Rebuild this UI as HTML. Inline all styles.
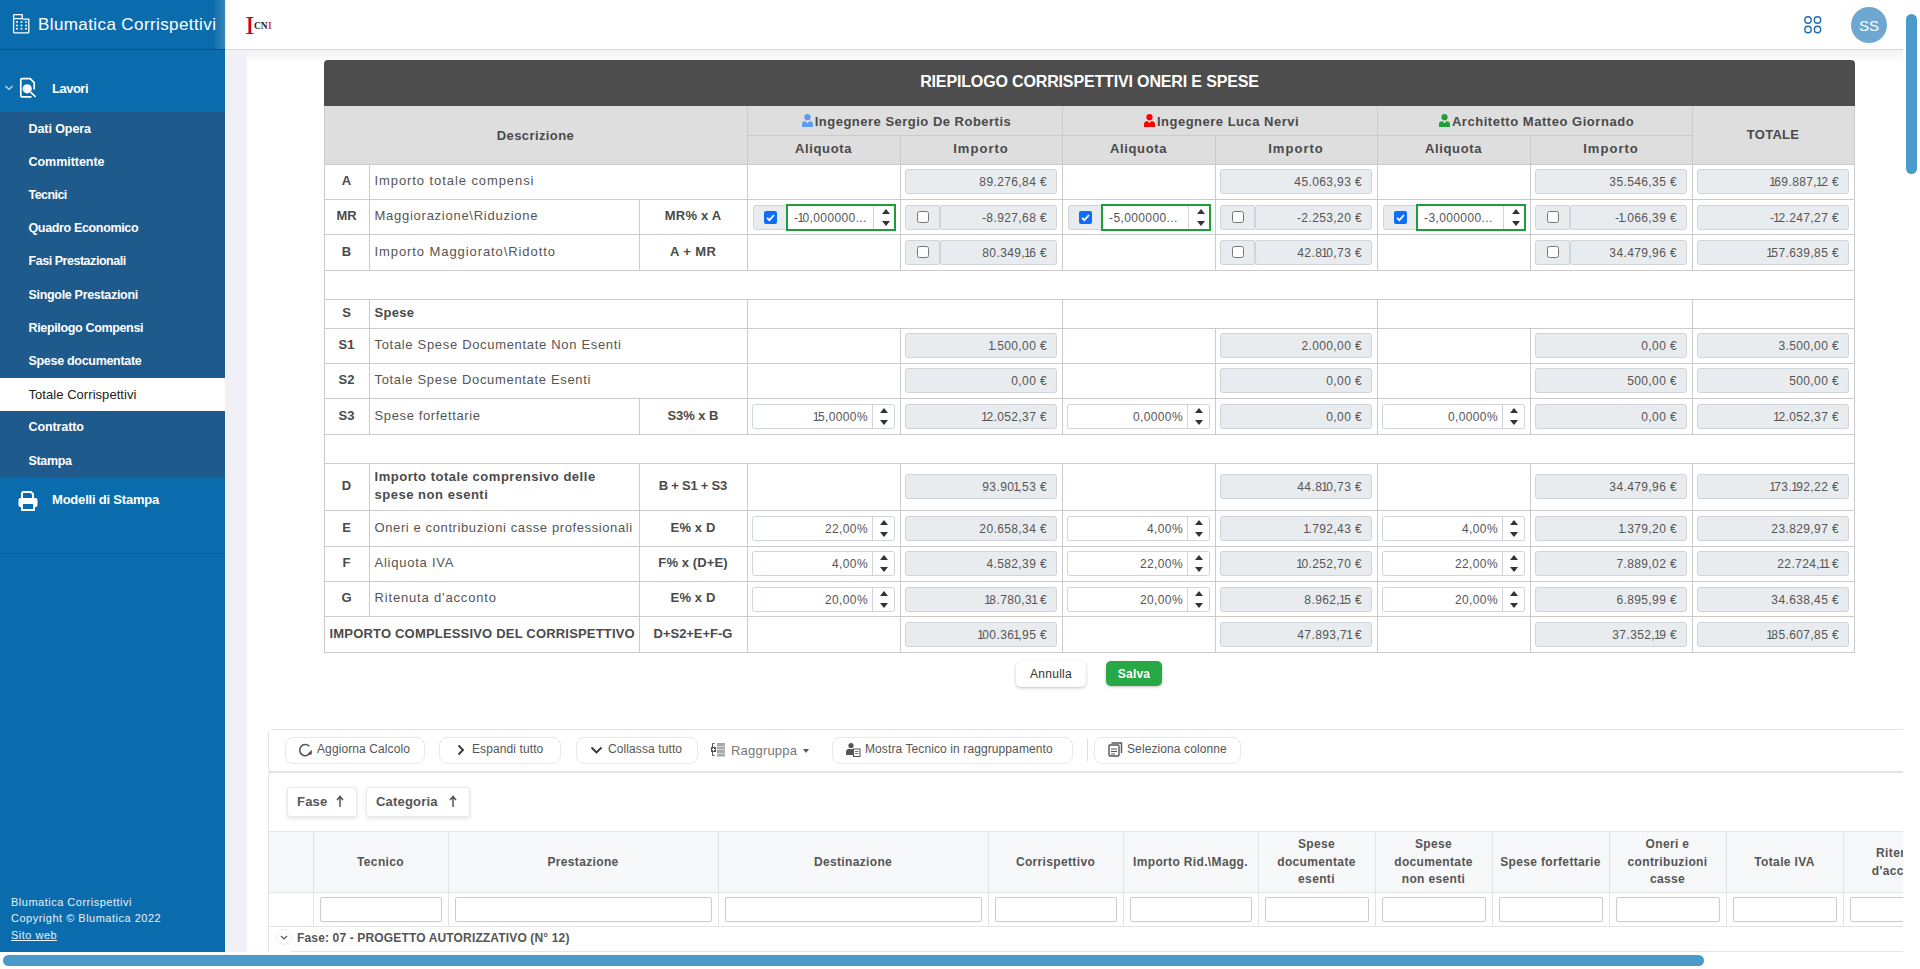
<!DOCTYPE html><html><head><meta charset="utf-8"><title>Blumatica Corrispettivi</title><style>
*{box-sizing:border-box;margin:0;padding:0}
html,body{width:1920px;height:969px;overflow:hidden;background:#fff;font-family:"Liberation Sans",sans-serif;color:#555}
.abs{position:absolute}
.hl{position:absolute;height:1px;background:#cbcbcb}
.vl{position:absolute;width:1px;background:#cbcbcb}
.t{position:absolute;white-space:nowrap;line-height:1}
.ro{position:absolute;background:#e9ecef;border:1px solid #ced4da;border-radius:3px;height:25px}
.num{position:absolute;background:#fff;border:1px solid #ced4da;border-radius:2.5px;height:25px}
.spin{position:absolute;top:0;bottom:0;border-left:1px solid #ced4da}
.up{position:absolute;width:0;height:0;border-left:4.5px solid transparent;border-right:4.5px solid transparent;border-bottom:5px solid #333}
.dn{position:absolute;width:0;height:0;border-left:4.5px solid transparent;border-right:4.5px solid transparent;border-top:5px solid #333}
.cb{position:absolute;width:12px;height:12px;border:1px solid #767676;border-radius:2.5px;background:#fff}
.cbc{position:absolute;width:13px;height:13px;border-radius:2px;background:#0d6efd}
.val{position:absolute;font-size:12px;letter-spacing:0.39px;color:#555;line-height:1;white-space:nowrap}
.one{margin-left:-1px;letter-spacing:-1.61px}
.btn{position:absolute;border:1px solid #e6e7ef;border-radius:8px;background:#fff}
</style></head><body>
<div class="abs" style="left:0;top:0;width:225px;height:952px;background:#0b6cad"></div>
<div class="abs" style="left:0;top:49px;width:225px;height:1px;background:#0a4f86"></div>
<div class="abs" style="left:213px;top:0;width:12px;height:49px;background:linear-gradient(90deg,rgba(255,255,255,0),rgba(255,255,255,0.18))"></div>
<svg class="abs" style="left:12px;top:13px" width="19" height="21" viewBox="0 0 19 21">
<path d="M2.2 1.6 H10.2 V5.6 M2.2 5.6 H10.2 M10.5 6.2 H16.8 V19.2 Q16.8 19.8 16.2 19.8 H2.2 Q1.6 19.8 1.6 19.2 V2.2 Q1.6 1.6 2.2 1.6" fill="none" stroke="#fff" stroke-width="1.3"/>
<g fill="#fff"><circle cx="5" cy="9" r="1"/><circle cx="9.5" cy="9" r="1"/><circle cx="14" cy="9" r="1"/>
<circle cx="5" cy="12.4" r="1"/><circle cx="9.5" cy="12.4" r="1"/><circle cx="14" cy="12.4" r="1"/>
<circle cx="5" cy="15.8" r="1"/><circle cx="9.5" cy="15.8" r="1"/><circle cx="14" cy="15.8" r="1"/></g>
</svg>
<div class="t" style="left:38px;top:16px;font-size:17px;letter-spacing:0.4px;color:#fff">Blumatica Corrispettivi</div>
<svg class="abs" style="left:4px;top:84px" width="10" height="8" viewBox="0 0 10 8"><path d="M1.5 2 L5 5.5 L8.5 2" fill="none" stroke="#cfe0ee" stroke-width="1.2"/></svg>
<svg class="abs" style="left:19px;top:77px" width="19" height="22" viewBox="0 0 19 22">
<path d="M12.5 19.8 H3 Q1.8 19.8 1.8 18.6 V2.8 Q1.8 1.6 3 1.6 H11.2 L15.2 5.6 V12.5" fill="none" stroke="#fff" stroke-width="1.7" stroke-linejoin="round"/>
<circle cx="8.2" cy="11.8" r="4.6" fill="#fff"/>
<path d="M11.6 15.2 L16.6 19.8" stroke="#fff" stroke-width="1.6"/>
</svg>
<div class="t" style="left:52px;top:82px;font-size:13px;font-weight:bold;color:#fff;letter-spacing:-0.503px">Lavori</div>
<div class="abs" style="left:0;top:112px;width:225px;height:365px;background:#1f5a8d"></div>
<div class="t" style="left:28.5px;top:122.5px;font-size:12.5px;font-weight:bold;color:#fff;letter-spacing:-0.078px">Dati Opera</div>
<div class="t" style="left:28.5px;top:155.7px;font-size:12.5px;font-weight:bold;color:#fff;letter-spacing:-0.037px">Committente</div>
<div class="t" style="left:28.5px;top:188.9px;font-size:12.5px;font-weight:bold;color:#fff;letter-spacing:-0.559px">Tecnici</div>
<div class="t" style="left:28.5px;top:222.1px;font-size:12.5px;font-weight:bold;color:#fff;letter-spacing:-0.348px">Quadro Economico</div>
<div class="t" style="left:28.5px;top:255.3px;font-size:12.5px;font-weight:bold;color:#fff;letter-spacing:-0.464px">Fasi Prestazionali</div>
<div class="t" style="left:28.5px;top:288.5px;font-size:12.5px;font-weight:bold;color:#fff;letter-spacing:-0.312px">Singole Prestazioni</div>
<div class="t" style="left:28.5px;top:321.7px;font-size:12.5px;font-weight:bold;color:#fff;letter-spacing:-0.345px">Riepilogo Compensi</div>
<div class="t" style="left:28.5px;top:354.9px;font-size:12.5px;font-weight:bold;color:#fff;letter-spacing:-0.301px">Spese documentate</div>
<div class="abs" style="left:0;top:378px;width:225px;height:33px;background:#fff"></div>
<div class="t" style="left:28.5px;top:387.6px;font-size:13px;color:#222;letter-spacing:0.05px">Totale Corrispettivi</div>
<div class="t" style="left:28.5px;top:421.3px;font-size:12.5px;font-weight:bold;color:#fff;letter-spacing:-0.092px">Contratto</div>
<div class="t" style="left:28.5px;top:454.5px;font-size:12.5px;font-weight:bold;color:#fff;letter-spacing:-0.331px">Stampa</div>
<div class="abs" style="left:0;top:553px;width:225px;height:1px;background:#0a5d98"></div>
<svg class="abs" style="left:17px;top:490px" width="22" height="22" viewBox="0 0 22 22">
<path d="M5 8 V3.5 Q5 2 6.5 2 H14 L16 4 V8" fill="none" stroke="#fff" stroke-width="2"/>
<rect x="1.5" y="8" width="19" height="9" rx="2" fill="#fff"/>
<rect x="5" y="13" width="12" height="7" fill="#0b6cad" stroke="#fff" stroke-width="2"/>
</svg>
<div class="t" style="left:52px;top:493px;font-size:13px;font-weight:bold;color:#fff;letter-spacing:-0.2px">Modelli di Stampa</div>
<div class="t" style="left:11px;top:897px;font-size:11px;color:#e8f0f7;letter-spacing:0.5px">Blumatica Corrispettivi</div>
<div class="t" style="left:11px;top:913px;font-size:11px;color:#e8f0f7;letter-spacing:0.5px">Copyright © Blumatica 2022</div>
<div class="t" style="left:11px;top:930px;font-size:11px;color:#e8f0f7;letter-spacing:0.5px;text-decoration:underline">Sito web</div>
<div class="abs" style="left:225px;top:0;width:1678px;height:50px;background:#fff;border-bottom:1px solid #d9d9d9"></div>
<div class="t" style="left:245px;top:13px;font-family:'Liberation Serif',serif;font-size:25px;color:#c8001e;transform:scaleX(1.15);transform-origin:left">I</div>
<div class="t" style="left:254px;top:22px;font-family:'Liberation Serif',serif;font-size:9.5px;font-weight:bold;color:#222">CN</div>
<div class="t" style="left:268px;top:22px;font-family:'Liberation Serif',serif;font-size:9.5px;font-weight:bold;color:#d04050">I</div>
<svg class="abs" style="left:1803px;top:15px" width="20" height="20" viewBox="0 0 20 20"><g fill="none" stroke="#1f6db0" stroke-width="1.4">
<circle cx="5" cy="5" r="3.2"/><circle cx="14.5" cy="5" r="3.2"/><circle cx="5" cy="14.5" r="3.2"/><circle cx="14.5" cy="14.5" r="3.2"/></g></svg>
<div class="abs" style="left:1851px;top:7px;width:36px;height:36px;border-radius:50%;background:#6ea8d0"></div>
<div class="t" style="left:1851px;top:18px;width:36px;text-align:center;font-size:15px;color:#fff">SS</div>
<div class="abs" style="left:225px;top:50px;width:22px;height:902px;background:#f1f0f6"></div>
<div class="abs" style="left:247px;top:50px;width:1656px;height:13px;background:linear-gradient(#f2f2f2,#fff)"></div>
<div class="abs" style="left:324px;top:60px;width:1531px;height:46px;background:#4d4d4d;border-radius:4px 4px 0 0"></div>
<div class="t" style="left:324px;top:74px;width:1531px;text-align:center;font-size:16px;font-weight:bold;color:#fff;letter-spacing:-0.146px">RIEPILOGO CORRISPETTIVI ONERI E SPESE</div>
<div class="abs" style="left:324px;top:106px;width:1531px;height:58px;background:#dedede"></div>
<div class="hl" style="left:324px;top:164px;width:1531px"></div>
<div class="hl" style="left:324px;top:199px;width:1531px"></div>
<div class="hl" style="left:324px;top:234px;width:1531px"></div>
<div class="hl" style="left:324px;top:270px;width:1531px"></div>
<div class="hl" style="left:324px;top:299px;width:1531px"></div>
<div class="hl" style="left:324px;top:328px;width:1531px"></div>
<div class="hl" style="left:324px;top:363px;width:1531px"></div>
<div class="hl" style="left:324px;top:398px;width:1531px"></div>
<div class="hl" style="left:324px;top:434px;width:1531px"></div>
<div class="hl" style="left:324px;top:463px;width:1531px"></div>
<div class="hl" style="left:324px;top:510px;width:1531px"></div>
<div class="hl" style="left:324px;top:546px;width:1531px"></div>
<div class="hl" style="left:324px;top:581px;width:1531px"></div>
<div class="hl" style="left:324px;top:616px;width:1531px"></div>
<div class="hl" style="left:324px;top:652px;width:1531px"></div>
<div class="hl" style="left:747px;top:135px;width:945px"></div>
<div class="vl" style="left:324px;top:106px;height:547px"></div>
<div class="vl" style="left:1854px;top:106px;height:547px"></div>
<div class="vl" style="left:747px;top:106px;height:58px"></div>
<div class="vl" style="left:1062px;top:106px;height:58px"></div>
<div class="vl" style="left:1377px;top:106px;height:58px"></div>
<div class="vl" style="left:1692px;top:106px;height:58px"></div>
<div class="vl" style="left:900px;top:135px;height:29px"></div>
<div class="vl" style="left:1215px;top:135px;height:29px"></div>
<div class="vl" style="left:1530px;top:135px;height:29px"></div>
<div class="vl" style="left:369px;top:164px;height:35px"></div>
<div class="vl" style="left:747px;top:164px;height:35px"></div>
<div class="vl" style="left:900px;top:164px;height:35px"></div>
<div class="vl" style="left:1062px;top:164px;height:35px"></div>
<div class="vl" style="left:1215px;top:164px;height:35px"></div>
<div class="vl" style="left:1377px;top:164px;height:35px"></div>
<div class="vl" style="left:1530px;top:164px;height:35px"></div>
<div class="vl" style="left:1692px;top:164px;height:35px"></div>
<div class="vl" style="left:369px;top:199px;height:35px"></div>
<div class="vl" style="left:639px;top:199px;height:35px"></div>
<div class="vl" style="left:747px;top:199px;height:35px"></div>
<div class="vl" style="left:900px;top:199px;height:35px"></div>
<div class="vl" style="left:1062px;top:199px;height:35px"></div>
<div class="vl" style="left:1215px;top:199px;height:35px"></div>
<div class="vl" style="left:1377px;top:199px;height:35px"></div>
<div class="vl" style="left:1530px;top:199px;height:35px"></div>
<div class="vl" style="left:1692px;top:199px;height:35px"></div>
<div class="vl" style="left:369px;top:234px;height:36px"></div>
<div class="vl" style="left:639px;top:234px;height:36px"></div>
<div class="vl" style="left:747px;top:234px;height:36px"></div>
<div class="vl" style="left:900px;top:234px;height:36px"></div>
<div class="vl" style="left:1062px;top:234px;height:36px"></div>
<div class="vl" style="left:1215px;top:234px;height:36px"></div>
<div class="vl" style="left:1377px;top:234px;height:36px"></div>
<div class="vl" style="left:1530px;top:234px;height:36px"></div>
<div class="vl" style="left:1692px;top:234px;height:36px"></div>
<div class="vl" style="left:369px;top:299px;height:29px"></div>
<div class="vl" style="left:747px;top:299px;height:29px"></div>
<div class="vl" style="left:1062px;top:299px;height:29px"></div>
<div class="vl" style="left:1377px;top:299px;height:29px"></div>
<div class="vl" style="left:1692px;top:299px;height:29px"></div>
<div class="vl" style="left:369px;top:328px;height:35px"></div>
<div class="vl" style="left:747px;top:328px;height:35px"></div>
<div class="vl" style="left:900px;top:328px;height:35px"></div>
<div class="vl" style="left:1062px;top:328px;height:35px"></div>
<div class="vl" style="left:1215px;top:328px;height:35px"></div>
<div class="vl" style="left:1377px;top:328px;height:35px"></div>
<div class="vl" style="left:1530px;top:328px;height:35px"></div>
<div class="vl" style="left:1692px;top:328px;height:35px"></div>
<div class="vl" style="left:369px;top:363px;height:35px"></div>
<div class="vl" style="left:747px;top:363px;height:35px"></div>
<div class="vl" style="left:900px;top:363px;height:35px"></div>
<div class="vl" style="left:1062px;top:363px;height:35px"></div>
<div class="vl" style="left:1215px;top:363px;height:35px"></div>
<div class="vl" style="left:1377px;top:363px;height:35px"></div>
<div class="vl" style="left:1530px;top:363px;height:35px"></div>
<div class="vl" style="left:1692px;top:363px;height:35px"></div>
<div class="vl" style="left:369px;top:398px;height:36px"></div>
<div class="vl" style="left:639px;top:398px;height:36px"></div>
<div class="vl" style="left:747px;top:398px;height:36px"></div>
<div class="vl" style="left:900px;top:398px;height:36px"></div>
<div class="vl" style="left:1062px;top:398px;height:36px"></div>
<div class="vl" style="left:1215px;top:398px;height:36px"></div>
<div class="vl" style="left:1377px;top:398px;height:36px"></div>
<div class="vl" style="left:1530px;top:398px;height:36px"></div>
<div class="vl" style="left:1692px;top:398px;height:36px"></div>
<div class="vl" style="left:369px;top:463px;height:47px"></div>
<div class="vl" style="left:639px;top:463px;height:47px"></div>
<div class="vl" style="left:747px;top:463px;height:47px"></div>
<div class="vl" style="left:900px;top:463px;height:47px"></div>
<div class="vl" style="left:1062px;top:463px;height:47px"></div>
<div class="vl" style="left:1215px;top:463px;height:47px"></div>
<div class="vl" style="left:1377px;top:463px;height:47px"></div>
<div class="vl" style="left:1530px;top:463px;height:47px"></div>
<div class="vl" style="left:1692px;top:463px;height:47px"></div>
<div class="vl" style="left:369px;top:510px;height:36px"></div>
<div class="vl" style="left:639px;top:510px;height:36px"></div>
<div class="vl" style="left:747px;top:510px;height:36px"></div>
<div class="vl" style="left:900px;top:510px;height:36px"></div>
<div class="vl" style="left:1062px;top:510px;height:36px"></div>
<div class="vl" style="left:1215px;top:510px;height:36px"></div>
<div class="vl" style="left:1377px;top:510px;height:36px"></div>
<div class="vl" style="left:1530px;top:510px;height:36px"></div>
<div class="vl" style="left:1692px;top:510px;height:36px"></div>
<div class="vl" style="left:369px;top:546px;height:35px"></div>
<div class="vl" style="left:639px;top:546px;height:35px"></div>
<div class="vl" style="left:747px;top:546px;height:35px"></div>
<div class="vl" style="left:900px;top:546px;height:35px"></div>
<div class="vl" style="left:1062px;top:546px;height:35px"></div>
<div class="vl" style="left:1215px;top:546px;height:35px"></div>
<div class="vl" style="left:1377px;top:546px;height:35px"></div>
<div class="vl" style="left:1530px;top:546px;height:35px"></div>
<div class="vl" style="left:1692px;top:546px;height:35px"></div>
<div class="vl" style="left:369px;top:581px;height:35px"></div>
<div class="vl" style="left:639px;top:581px;height:35px"></div>
<div class="vl" style="left:747px;top:581px;height:35px"></div>
<div class="vl" style="left:900px;top:581px;height:35px"></div>
<div class="vl" style="left:1062px;top:581px;height:35px"></div>
<div class="vl" style="left:1215px;top:581px;height:35px"></div>
<div class="vl" style="left:1377px;top:581px;height:35px"></div>
<div class="vl" style="left:1530px;top:581px;height:35px"></div>
<div class="vl" style="left:1692px;top:581px;height:35px"></div>
<div class="vl" style="left:639px;top:616px;height:36px"></div>
<div class="vl" style="left:747px;top:616px;height:36px"></div>
<div class="vl" style="left:900px;top:616px;height:36px"></div>
<div class="vl" style="left:1062px;top:616px;height:36px"></div>
<div class="vl" style="left:1215px;top:616px;height:36px"></div>
<div class="vl" style="left:1377px;top:616px;height:36px"></div>
<div class="vl" style="left:1530px;top:616px;height:36px"></div>
<div class="vl" style="left:1692px;top:616px;height:36px"></div>
<div class="t" style="left:324px;top:128.5px;width:423px;text-align:center;font-size:13px;font-weight:bold;color:#4a4a4a;letter-spacing:0.402px">Descrizione</div>
<div class="t" style="left:749px;top:113.5px;width:315px;text-align:center;font-size:13px;font-weight:bold;color:#4a4a4a;letter-spacing:0.49px"><svg width="11" height="13" viewBox="0 0 11 13" style="vertical-align:-1px;margin-right:2px"><circle cx="5.5" cy="3.2" r="3.1" fill="#5b9bf0"/><path d="M0 13 V10.2 Q0 7.3 3 7.3 H8 Q11 7.3 11 10.2 V13 Z" fill="#5b9bf0"/><path d="M3.8 7.3 L5.5 9.3 L7.2 7.3Z" fill="#fff"/></svg>Ingegnere Sergio De Robertis</div>
<div class="t" style="left:1064px;top:113.5px;width:315px;text-align:center;font-size:13px;font-weight:bold;color:#4a4a4a;letter-spacing:0.494px"><svg width="11" height="13" viewBox="0 0 11 13" style="vertical-align:-1px;margin-right:2px"><circle cx="5.5" cy="3.2" r="3.1" fill="#ff0000"/><path d="M0 13 V10.2 Q0 7.3 3 7.3 H8 Q11 7.3 11 10.2 V13 Z" fill="#ff0000"/><path d="M3.8 7.3 L5.5 9.3 L7.2 7.3Z" fill="#fff"/></svg>Ingegnere Luca Nervi</div>
<div class="t" style="left:1379px;top:113.5px;width:315px;text-align:center;font-size:13px;font-weight:bold;color:#4a4a4a;letter-spacing:0.537px"><svg width="11" height="13" viewBox="0 0 11 13" style="vertical-align:-1px;margin-right:2px"><circle cx="5.5" cy="3.2" r="3.1" fill="#1e9e3a"/><path d="M0 13 V10.2 Q0 7.3 3 7.3 H8 Q11 7.3 11 10.2 V13 Z" fill="#1e9e3a"/><path d="M3.8 7.3 L5.5 9.3 L7.2 7.3Z" fill="#fff"/></svg>Architetto Matteo Giornado</div>
<div class="t" style="left:747px;top:142.0px;width:153px;text-align:center;font-size:13px;font-weight:bold;color:#4a4a4a;letter-spacing:0.645px">Aliquota</div>
<div class="t" style="left:900px;top:142.0px;width:162px;text-align:center;font-size:13px;font-weight:bold;color:#4a4a4a;letter-spacing:1.038px">Importo</div>
<div class="t" style="left:1062px;top:142.0px;width:153px;text-align:center;font-size:13px;font-weight:bold;color:#4a4a4a;letter-spacing:0.645px">Aliquota</div>
<div class="t" style="left:1215px;top:142.0px;width:162px;text-align:center;font-size:13px;font-weight:bold;color:#4a4a4a;letter-spacing:1.038px">Importo</div>
<div class="t" style="left:1377px;top:142.0px;width:153px;text-align:center;font-size:13px;font-weight:bold;color:#4a4a4a;letter-spacing:0.645px">Aliquota</div>
<div class="t" style="left:1530px;top:142.0px;width:162px;text-align:center;font-size:13px;font-weight:bold;color:#4a4a4a;letter-spacing:1.038px">Importo</div>
<div class="t" style="left:1692px;top:128.0px;width:162px;text-align:center;font-size:13px;font-weight:bold;color:#4a4a4a;letter-spacing:0.244px">TOTALE</div>
<div class="t" style="left:324px;top:174.0px;width:45px;text-align:center;font-size:13px;font-weight:bold;color:#4a4a4a;letter-spacing:0px">A</div>
<div class="t" style="left:324px;top:209.0px;width:45px;text-align:center;font-size:13px;font-weight:bold;color:#4a4a4a;letter-spacing:0px">MR</div>
<div class="t" style="left:324px;top:244.5px;width:45px;text-align:center;font-size:13px;font-weight:bold;color:#4a4a4a;letter-spacing:0px">B</div>
<div class="t" style="left:324px;top:306.0px;width:45px;text-align:center;font-size:13px;font-weight:bold;color:#4a4a4a;letter-spacing:0px">S</div>
<div class="t" style="left:324px;top:338.0px;width:45px;text-align:center;font-size:13px;font-weight:bold;color:#4a4a4a;letter-spacing:0px">S1</div>
<div class="t" style="left:324px;top:373.0px;width:45px;text-align:center;font-size:13px;font-weight:bold;color:#4a4a4a;letter-spacing:0px">S2</div>
<div class="t" style="left:324px;top:408.5px;width:45px;text-align:center;font-size:13px;font-weight:bold;color:#4a4a4a;letter-spacing:0px">S3</div>
<div class="t" style="left:324px;top:479.0px;width:45px;text-align:center;font-size:13px;font-weight:bold;color:#4a4a4a;letter-spacing:0px">D</div>
<div class="t" style="left:324px;top:520.5px;width:45px;text-align:center;font-size:13px;font-weight:bold;color:#4a4a4a;letter-spacing:0px">E</div>
<div class="t" style="left:324px;top:556.0px;width:45px;text-align:center;font-size:13px;font-weight:bold;color:#4a4a4a;letter-spacing:0px">F</div>
<div class="t" style="left:324px;top:591.0px;width:45px;text-align:center;font-size:13px;font-weight:bold;color:#4a4a4a;letter-spacing:0px">G</div>
<div class="t" style="left:374.5px;top:174.0px;font-size:13px;color:#555;letter-spacing:0.92px">Importo totale compensi</div>
<div class="t" style="left:374.5px;top:209.0px;font-size:13px;color:#555;letter-spacing:0.738px">Maggiorazione\Riduzione</div>
<div class="t" style="left:374.5px;top:244.5px;font-size:13px;color:#555;letter-spacing:0.917px">Importo Maggiorato\Ridotto</div>
<div class="t" style="left:374.5px;top:338.0px;font-size:13px;color:#555;letter-spacing:0.681px">Totale Spese Documentate Non Esenti</div>
<div class="t" style="left:374.5px;top:373.0px;font-size:13px;color:#555;letter-spacing:0.67px">Totale Spese Documentate Esenti</div>
<div class="t" style="left:374.5px;top:408.5px;font-size:13px;color:#555;letter-spacing:0.631px">Spese forfettarie</div>
<div class="t" style="left:374.5px;top:520.5px;font-size:13px;color:#555;letter-spacing:0.607px">Oneri e contribuzioni casse professionali</div>
<div class="t" style="left:374.5px;top:556.0px;font-size:13px;color:#555;letter-spacing:0.764px">Aliquota IVA</div>
<div class="t" style="left:374.5px;top:591.0px;font-size:13px;color:#555;letter-spacing:0.835px">Ritenuta d'acconto</div>
<div class="t" style="left:374.5px;top:306.0px;font-size:13px;font-weight:bold;color:#4a4a4a;letter-spacing:0.297px">Spese</div>
<div class="t" style="left:374.5px;top:467.5px;font-size:13px;font-weight:bold;color:#4a4a4a;letter-spacing:0.522px;line-height:18.5px">Importo totale comprensivo delle<br>spese non esenti</div>
<div class="t" style="left:329.5px;top:626.5px;font-size:13px;font-weight:bold;color:#4a4a4a;letter-spacing:0.185px">IMPORTO COMPLESSIVO DEL CORRISPETTIVO</div>
<div class="t" style="left:639.1135px;top:209.0px;width:108px;text-align:center;font-size:13px;font-weight:bold;color:#4a4a4a;letter-spacing:0.227px">MR% x A</div>
<div class="t" style="left:639.206px;top:244.5px;width:108px;text-align:center;font-size:13px;font-weight:bold;color:#4a4a4a;letter-spacing:0.412px">A + MR</div>
<div class="t" style="left:638.974px;top:408.5px;width:108px;text-align:center;font-size:13px;font-weight:bold;color:#4a4a4a;letter-spacing:-0.052px">S3% x B</div>
<div class="t" style="left:638.8835px;top:479.0px;width:108px;text-align:center;font-size:13px;font-weight:bold;color:#4a4a4a;letter-spacing:-0.233px">B + S1 + S3</div>
<div class="t" style="left:639.067px;top:520.5px;width:108px;text-align:center;font-size:13px;font-weight:bold;color:#4a4a4a;letter-spacing:0.134px">E% x D</div>
<div class="t" style="left:639.0545px;top:556.0px;width:108px;text-align:center;font-size:13px;font-weight:bold;color:#4a4a4a;letter-spacing:0.109px">F% x (D+E)</div>
<div class="t" style="left:639.067px;top:591.0px;width:108px;text-align:center;font-size:13px;font-weight:bold;color:#4a4a4a;letter-spacing:0.134px">E% x D</div>
<div class="t" style="left:638.979px;top:626.5px;width:108px;text-align:center;font-size:13px;font-weight:bold;color:#4a4a4a;letter-spacing:-0.042px">D+S2+E+F-G</div>
<div class="ro" style="left:905px;top:169px;width:152px"><div class="val" style="right:9px;top:6px">89.276,84 €</div></div>
<div class="ro" style="left:753px;top:205px;width:35px;border-radius:3px 0 0 3px"></div>
<div class="cbc" style="left:764px;top:211px"><svg width="13" height="13" viewBox="0 0 13 13" style="position:absolute;left:0;top:0"><path d="M3 6.8 L5.4 9.2 L10 4" fill="none" stroke="#fff" stroke-width="1.8"/></svg></div>
<div class="abs" style="left:786px;top:204px;width:110px;height:27px;border:2px solid #1e9e3a;background:#fff"><div class="val" style="left:6px;top:6px">-<span class="one">1</span>0,000000...</div><div class="spin" style="left:85px;width:1px"></div><div class="up" style="left:94px;top:3px"></div><div class="dn" style="left:94px;top:15px"></div></div>
<div class="ro" style="left:905px;top:205px;width:35px;border-radius:3px 0 0 3px"></div>
<div class="cb" style="left:917px;top:211px"></div>
<div class="ro" style="left:940px;top:205px;width:117px;border-radius:3px"><div class="val" style="right:9px;top:6px">-8.927,68 €</div></div>
<div class="ro" style="left:905px;top:240px;width:35px;border-radius:3px 0 0 3px"></div>
<div class="cb" style="left:917px;top:246px"></div>
<div class="ro" style="left:940px;top:240px;width:117px;border-radius:3px"><div class="val" style="right:9px;top:6px">80.349,<span class="one">1</span>6 €</div></div>
<div class="ro" style="left:905px;top:333px;width:152px"><div class="val" style="right:9px;top:6px"><span class="one">1</span>.500,00 €</div></div>
<div class="ro" style="left:905px;top:368px;width:152px"><div class="val" style="right:9px;top:6px">0,00 €</div></div>
<div class="num" style="left:752px;top:404px;width:143px"><div class="val" style="right:26px;top:6px"><span class="one">1</span>5,0000%</div><div class="spin" style="left:119px;width:23px"></div><div class="up" style="left:127px;top:3px"></div><div class="dn" style="left:127px;top:15px"></div></div>
<div class="ro" style="left:905px;top:404px;width:152px"><div class="val" style="right:9px;top:6px"><span class="one">1</span>2.052,37 €</div></div>
<div class="ro" style="left:905px;top:474px;width:152px"><div class="val" style="right:9px;top:6px">93.90<span class="one">1</span>,53 €</div></div>
<div class="num" style="left:752px;top:516px;width:143px"><div class="val" style="right:26px;top:6px">22,00%</div><div class="spin" style="left:119px;width:23px"></div><div class="up" style="left:127px;top:3px"></div><div class="dn" style="left:127px;top:15px"></div></div>
<div class="ro" style="left:905px;top:516px;width:152px"><div class="val" style="right:9px;top:6px">20.658,34 €</div></div>
<div class="num" style="left:752px;top:551px;width:143px"><div class="val" style="right:26px;top:6px">4,00%</div><div class="spin" style="left:119px;width:23px"></div><div class="up" style="left:127px;top:3px"></div><div class="dn" style="left:127px;top:15px"></div></div>
<div class="ro" style="left:905px;top:551px;width:152px"><div class="val" style="right:9px;top:6px">4.582,39 €</div></div>
<div class="num" style="left:752px;top:587px;width:143px"><div class="val" style="right:26px;top:6px">20,00%</div><div class="spin" style="left:119px;width:23px"></div><div class="up" style="left:127px;top:3px"></div><div class="dn" style="left:127px;top:15px"></div></div>
<div class="ro" style="left:905px;top:587px;width:152px"><div class="val" style="right:9px;top:6px"><span class="one">1</span>8.780,3<span class="one">1</span> €</div></div>
<div class="ro" style="left:905px;top:622px;width:152px"><div class="val" style="right:9px;top:6px"><span class="one">1</span>00.36<span class="one">1</span>,95 €</div></div>
<div class="ro" style="left:1220px;top:169px;width:152px"><div class="val" style="right:9px;top:6px">45.063,93 €</div></div>
<div class="ro" style="left:1068px;top:205px;width:35px;border-radius:3px 0 0 3px"></div>
<div class="cbc" style="left:1079px;top:211px"><svg width="13" height="13" viewBox="0 0 13 13" style="position:absolute;left:0;top:0"><path d="M3 6.8 L5.4 9.2 L10 4" fill="none" stroke="#fff" stroke-width="1.8"/></svg></div>
<div class="abs" style="left:1101px;top:204px;width:110px;height:27px;border:2px solid #1e9e3a;background:#fff"><div class="val" style="left:6px;top:6px">-5,000000...</div><div class="spin" style="left:85px;width:1px"></div><div class="up" style="left:94px;top:3px"></div><div class="dn" style="left:94px;top:15px"></div></div>
<div class="ro" style="left:1220px;top:205px;width:35px;border-radius:3px 0 0 3px"></div>
<div class="cb" style="left:1232px;top:211px"></div>
<div class="ro" style="left:1255px;top:205px;width:117px;border-radius:3px"><div class="val" style="right:9px;top:6px">-2.253,20 €</div></div>
<div class="ro" style="left:1220px;top:240px;width:35px;border-radius:3px 0 0 3px"></div>
<div class="cb" style="left:1232px;top:246px"></div>
<div class="ro" style="left:1255px;top:240px;width:117px;border-radius:3px"><div class="val" style="right:9px;top:6px">42.8<span class="one">1</span>0,73 €</div></div>
<div class="ro" style="left:1220px;top:333px;width:152px"><div class="val" style="right:9px;top:6px">2.000,00 €</div></div>
<div class="ro" style="left:1220px;top:368px;width:152px"><div class="val" style="right:9px;top:6px">0,00 €</div></div>
<div class="num" style="left:1067px;top:404px;width:143px"><div class="val" style="right:26px;top:6px">0,0000%</div><div class="spin" style="left:119px;width:23px"></div><div class="up" style="left:127px;top:3px"></div><div class="dn" style="left:127px;top:15px"></div></div>
<div class="ro" style="left:1220px;top:404px;width:152px"><div class="val" style="right:9px;top:6px">0,00 €</div></div>
<div class="ro" style="left:1220px;top:474px;width:152px"><div class="val" style="right:9px;top:6px">44.8<span class="one">1</span>0,73 €</div></div>
<div class="num" style="left:1067px;top:516px;width:143px"><div class="val" style="right:26px;top:6px">4,00%</div><div class="spin" style="left:119px;width:23px"></div><div class="up" style="left:127px;top:3px"></div><div class="dn" style="left:127px;top:15px"></div></div>
<div class="ro" style="left:1220px;top:516px;width:152px"><div class="val" style="right:9px;top:6px"><span class="one">1</span>.792,43 €</div></div>
<div class="num" style="left:1067px;top:551px;width:143px"><div class="val" style="right:26px;top:6px">22,00%</div><div class="spin" style="left:119px;width:23px"></div><div class="up" style="left:127px;top:3px"></div><div class="dn" style="left:127px;top:15px"></div></div>
<div class="ro" style="left:1220px;top:551px;width:152px"><div class="val" style="right:9px;top:6px"><span class="one">1</span>0.252,70 €</div></div>
<div class="num" style="left:1067px;top:587px;width:143px"><div class="val" style="right:26px;top:6px">20,00%</div><div class="spin" style="left:119px;width:23px"></div><div class="up" style="left:127px;top:3px"></div><div class="dn" style="left:127px;top:15px"></div></div>
<div class="ro" style="left:1220px;top:587px;width:152px"><div class="val" style="right:9px;top:6px">8.962,<span class="one">1</span>5 €</div></div>
<div class="ro" style="left:1220px;top:622px;width:152px"><div class="val" style="right:9px;top:6px">47.893,7<span class="one">1</span> €</div></div>
<div class="ro" style="left:1535px;top:169px;width:152px"><div class="val" style="right:9px;top:6px">35.546,35 €</div></div>
<div class="ro" style="left:1383px;top:205px;width:35px;border-radius:3px 0 0 3px"></div>
<div class="cbc" style="left:1394px;top:211px"><svg width="13" height="13" viewBox="0 0 13 13" style="position:absolute;left:0;top:0"><path d="M3 6.8 L5.4 9.2 L10 4" fill="none" stroke="#fff" stroke-width="1.8"/></svg></div>
<div class="abs" style="left:1416px;top:204px;width:110px;height:27px;border:2px solid #1e9e3a;background:#fff"><div class="val" style="left:6px;top:6px">-3,000000...</div><div class="spin" style="left:85px;width:1px"></div><div class="up" style="left:94px;top:3px"></div><div class="dn" style="left:94px;top:15px"></div></div>
<div class="ro" style="left:1535px;top:205px;width:35px;border-radius:3px 0 0 3px"></div>
<div class="cb" style="left:1547px;top:211px"></div>
<div class="ro" style="left:1570px;top:205px;width:117px;border-radius:3px"><div class="val" style="right:9px;top:6px">-<span class="one">1</span>.066,39 €</div></div>
<div class="ro" style="left:1535px;top:240px;width:35px;border-radius:3px 0 0 3px"></div>
<div class="cb" style="left:1547px;top:246px"></div>
<div class="ro" style="left:1570px;top:240px;width:117px;border-radius:3px"><div class="val" style="right:9px;top:6px">34.479,96 €</div></div>
<div class="ro" style="left:1535px;top:333px;width:152px"><div class="val" style="right:9px;top:6px">0,00 €</div></div>
<div class="ro" style="left:1535px;top:368px;width:152px"><div class="val" style="right:9px;top:6px">500,00 €</div></div>
<div class="num" style="left:1382px;top:404px;width:143px"><div class="val" style="right:26px;top:6px">0,0000%</div><div class="spin" style="left:119px;width:23px"></div><div class="up" style="left:127px;top:3px"></div><div class="dn" style="left:127px;top:15px"></div></div>
<div class="ro" style="left:1535px;top:404px;width:152px"><div class="val" style="right:9px;top:6px">0,00 €</div></div>
<div class="ro" style="left:1535px;top:474px;width:152px"><div class="val" style="right:9px;top:6px">34.479,96 €</div></div>
<div class="num" style="left:1382px;top:516px;width:143px"><div class="val" style="right:26px;top:6px">4,00%</div><div class="spin" style="left:119px;width:23px"></div><div class="up" style="left:127px;top:3px"></div><div class="dn" style="left:127px;top:15px"></div></div>
<div class="ro" style="left:1535px;top:516px;width:152px"><div class="val" style="right:9px;top:6px"><span class="one">1</span>.379,20 €</div></div>
<div class="num" style="left:1382px;top:551px;width:143px"><div class="val" style="right:26px;top:6px">22,00%</div><div class="spin" style="left:119px;width:23px"></div><div class="up" style="left:127px;top:3px"></div><div class="dn" style="left:127px;top:15px"></div></div>
<div class="ro" style="left:1535px;top:551px;width:152px"><div class="val" style="right:9px;top:6px">7.889,02 €</div></div>
<div class="num" style="left:1382px;top:587px;width:143px"><div class="val" style="right:26px;top:6px">20,00%</div><div class="spin" style="left:119px;width:23px"></div><div class="up" style="left:127px;top:3px"></div><div class="dn" style="left:127px;top:15px"></div></div>
<div class="ro" style="left:1535px;top:587px;width:152px"><div class="val" style="right:9px;top:6px">6.895,99 €</div></div>
<div class="ro" style="left:1535px;top:622px;width:152px"><div class="val" style="right:9px;top:6px">37.352,<span class="one">1</span>9 €</div></div>
<div class="ro" style="left:1697px;top:169px;width:152px"><div class="val" style="right:9px;top:6px"><span class="one">1</span>69.887,<span class="one">1</span>2 €</div></div>
<div class="ro" style="left:1697px;top:205px;width:152px"><div class="val" style="right:9px;top:6px">-<span class="one">1</span>2.247,27 €</div></div>
<div class="ro" style="left:1697px;top:240px;width:152px"><div class="val" style="right:9px;top:6px"><span class="one">1</span>57.639,85 €</div></div>
<div class="ro" style="left:1697px;top:333px;width:152px"><div class="val" style="right:9px;top:6px">3.500,00 €</div></div>
<div class="ro" style="left:1697px;top:368px;width:152px"><div class="val" style="right:9px;top:6px">500,00 €</div></div>
<div class="ro" style="left:1697px;top:404px;width:152px"><div class="val" style="right:9px;top:6px"><span class="one">1</span>2.052,37 €</div></div>
<div class="ro" style="left:1697px;top:474px;width:152px"><div class="val" style="right:9px;top:6px"><span class="one">1</span>73.<span class="one">1</span>92,22 €</div></div>
<div class="ro" style="left:1697px;top:516px;width:152px"><div class="val" style="right:9px;top:6px">23.829,97 €</div></div>
<div class="ro" style="left:1697px;top:551px;width:152px"><div class="val" style="right:9px;top:6px">22.724,<span class="one">1</span><span class="one">1</span> €</div></div>
<div class="ro" style="left:1697px;top:587px;width:152px"><div class="val" style="right:9px;top:6px">34.638,45 €</div></div>
<div class="ro" style="left:1697px;top:622px;width:152px"><div class="val" style="right:9px;top:6px"><span class="one">1</span>85.607,85 €</div></div>
<div class="abs" style="left:1016px;top:661px;width:70px;height:26px;border-radius:5px;background:#fff;box-shadow:0 1px 3px rgba(0,0,0,0.25)"></div>
<div class="t" style="left:1016px;top:668px;width:70px;text-align:center;font-size:12px;color:#333;letter-spacing:0.3px">Annulla</div>
<div class="abs" style="left:1106px;top:661px;width:56px;height:25px;border-radius:5px;background:#28a745;box-shadow:0 1px 3px rgba(0,0,0,0.25)"></div>
<div class="t" style="left:1106px;top:668px;width:56px;text-align:center;font-size:12px;font-weight:bold;color:#fff;letter-spacing:0.2px">Salva</div>
<div class="abs" style="left:268px;top:771px;width:1640px;height:2px;background:#e6e6e6"></div>
<div class="abs" style="left:268px;top:729px;width:1650px;height:43px;border:1px solid #e4e4e4;border-radius:5px;background:#fff"></div>
<div class="btn" style="left:285px;top:737px;width:140px;height:27px"></div>
<svg class="abs" style="left:298px;top:743px" width="15" height="14" viewBox="0 0 15 14"><path d="M11.3 3.2 A5.6 5.6 0 1 0 12.2 9.8" fill="none" stroke="#555" stroke-width="1.6"/><path d="M13.8 6.8 L13.8 11.6 L9 11.6 Z" fill="#555"/></svg>
<div class="t" style="left:317px;top:743px;font-size:12px;color:#555;letter-spacing:0.1px">Aggiorna Calcolo</div>
<div class="btn" style="left:439px;top:737px;width:122px;height:27px"></div>
<svg class="abs" style="left:456px;top:744px" width="10" height="12" viewBox="0 0 10 12"><path d="M2.5 1.5 L7 6 L2.5 10.5" fill="none" stroke="#333" stroke-width="1.8"/></svg>
<div class="t" style="left:472px;top:743px;font-size:12px;color:#555;letter-spacing:0.1px">Espandi tutto</div>
<div class="btn" style="left:576px;top:737px;width:122px;height:27px"></div>
<svg class="abs" style="left:590px;top:745px" width="13" height="10" viewBox="0 0 13 10"><path d="M1.5 2.5 L6.5 7.5 L11.5 2.5" fill="none" stroke="#333" stroke-width="1.8"/></svg>
<div class="t" style="left:608px;top:743px;font-size:12px;color:#555;letter-spacing:0.1px">Collassa tutto</div>
<svg class="abs" style="left:711px;top:742px" width="15" height="15" viewBox="0 0 15 15"><path d="M3.5 1.5 H1.5 V13.5 H3.5" fill="none" stroke="#555" stroke-width="1"/><rect x="0" y="5" width="5" height="5" fill="#555"/><path d="M2.5 6 V9 M1 7.5 H4" stroke="#fff" stroke-width="1"/><g fill="#aaa"><rect x="6" y="1" width="8" height="3"/><rect x="6" y="4.5" width="8" height="3"/><rect x="6" y="8" width="8" height="3"/><rect x="6" y="11.5" width="8" height="3"/></g></svg>
<div class="t" style="left:731px;top:744px;font-size:13px;color:#777;letter-spacing:0.2px">Raggruppa</div>
<div class="abs" style="left:803px;top:749px;width:0;height:0;border-left:3.5px solid transparent;border-right:3.5px solid transparent;border-top:4px solid #555"></div>
<div class="btn" style="left:832px;top:737px;width:241px;height:27px"></div>
<svg class="abs" style="left:846px;top:742px" width="15" height="15" viewBox="0 0 15 15"><circle cx="5" cy="3.5" r="2.6" fill="#555"/><path d="M0 13 V10 Q0 7 3 7 H7 L7 13Z" fill="#555"/><rect x="7.5" y="7" width="6.5" height="7.5" fill="#fff" stroke="#555" stroke-width="1"/><path d="M9 9.5 H12.5 M9 11.5 H12.5" stroke="#555" stroke-width="0.8"/></svg>
<div class="t" style="left:865px;top:743px;font-size:12px;color:#555;letter-spacing:0.1px">Mostra Tecnico in raggruppamento</div>
<div class="abs" style="left:1087px;top:739px;width:1px;height:22px;background:#ddd"></div>
<div class="btn" style="left:1094px;top:737px;width:147px;height:27px"></div>
<svg class="abs" style="left:1108px;top:742px" width="15" height="15" viewBox="0 0 15 15"><rect x="1" y="3" width="10" height="11" rx="1" fill="none" stroke="#555" stroke-width="1.4"/><path d="M3.5 1 H13.5 V11" fill="none" stroke="#555" stroke-width="1.4"/><path d="M3 7 H9 M3 9.5 H9 M3 12 H7" stroke="#555" stroke-width="1.2"/></svg>
<div class="t" style="left:1127px;top:743px;font-size:12px;color:#555;letter-spacing:0.1px">Seleziona colonne</div>
<div class="abs" style="left:268px;top:772px;width:1650px;height:190px;border:1px solid #e4e4e4;border-radius:5px;background:#fff"></div>
<div class="abs" style="left:287px;top:787px;width:70px;height:30px;border:1px solid #e8e8e8;border-radius:3px;background:#fff;box-shadow:0 2px 4px rgba(0,0,0,0.10)"></div>
<div class="t" style="left:297px;top:795px;font-size:13px;font-weight:bold;color:#555;letter-spacing:0.2px">Fase</div>
<svg class="abs" style="left:336px;top:795px" width="8" height="13" viewBox="0 0 8 13"><path d="M4 12 V2 M1 5 L4 1.5 L7 5" fill="none" stroke="#555" stroke-width="1.5"/></svg>
<div class="abs" style="left:366px;top:787px;width:104px;height:30px;border:1px solid #e8e8e8;border-radius:3px;background:#fff;box-shadow:0 2px 4px rgba(0,0,0,0.10)"></div>
<div class="t" style="left:376px;top:795px;font-size:13px;font-weight:bold;color:#555;letter-spacing:0.2px">Categoria</div>
<svg class="abs" style="left:449px;top:795px" width="8" height="13" viewBox="0 0 8 13"><path d="M4 12 V2 M1 5 L4 1.5 L7 5" fill="none" stroke="#555" stroke-width="1.5"/></svg>
<div class="abs" style="left:269px;top:832px;width:1634px;height:60px;background:#f7f8fa"></div>
<div class="abs" style="left:269px;top:831px;width:1634px;height:1px;background:#e2e4e8"></div>
<div class="abs" style="left:269px;top:892px;width:1634px;height:1px;background:#e2e4e8"></div>
<div class="abs" style="left:269px;top:926px;width:1634px;height:1px;background:#e2e4e8"></div>
<div class="abs" style="left:291px;top:951px;width:1612px;height:1px;background:#e2e4e8"></div>
<div class="abs" style="left:313px;top:832px;width:1px;height:94px;background:#e2e4e8"></div>
<div class="abs" style="left:448px;top:832px;width:1px;height:94px;background:#e2e4e8"></div>
<div class="abs" style="left:718px;top:832px;width:1px;height:94px;background:#e2e4e8"></div>
<div class="abs" style="left:988px;top:832px;width:1px;height:94px;background:#e2e4e8"></div>
<div class="abs" style="left:1123px;top:832px;width:1px;height:94px;background:#e2e4e8"></div>
<div class="abs" style="left:1258px;top:832px;width:1px;height:94px;background:#e2e4e8"></div>
<div class="abs" style="left:1375px;top:832px;width:1px;height:94px;background:#e2e4e8"></div>
<div class="abs" style="left:1492px;top:832px;width:1px;height:94px;background:#e2e4e8"></div>
<div class="abs" style="left:1609px;top:832px;width:1px;height:94px;background:#e2e4e8"></div>
<div class="abs" style="left:1726px;top:832px;width:1px;height:94px;background:#e2e4e8"></div>
<div class="abs" style="left:1843px;top:832px;width:1px;height:94px;background:#e2e4e8"></div>
<div class="t" style="left:313px;top:853.8px;width:135px;text-align:center;font-size:12px;font-weight:bold;color:#555;line-height:17.5px;letter-spacing:0.35px">Tecnico</div>
<div class="abs" style="left:320px;top:897px;width:122px;height:25px;border:1px solid #c9cdd3;border-radius:2px;background:#fff"></div>
<div class="t" style="left:448px;top:853.8px;width:270px;text-align:center;font-size:12px;font-weight:bold;color:#555;line-height:17.5px;letter-spacing:0.35px">Prestazione</div>
<div class="abs" style="left:455px;top:897px;width:257px;height:25px;border:1px solid #c9cdd3;border-radius:2px;background:#fff"></div>
<div class="t" style="left:718px;top:853.8px;width:270px;text-align:center;font-size:12px;font-weight:bold;color:#555;line-height:17.5px;letter-spacing:0.35px">Destinazione</div>
<div class="abs" style="left:725px;top:897px;width:257px;height:25px;border:1px solid #c9cdd3;border-radius:2px;background:#fff"></div>
<div class="t" style="left:988px;top:853.8px;width:135px;text-align:center;font-size:12px;font-weight:bold;color:#555;line-height:17.5px;letter-spacing:0.35px">Corrispettivo</div>
<div class="abs" style="left:995px;top:897px;width:122px;height:25px;border:1px solid #c9cdd3;border-radius:2px;background:#fff"></div>
<div class="t" style="left:1123px;top:853.8px;width:135px;text-align:center;font-size:12px;font-weight:bold;color:#555;line-height:17.5px;letter-spacing:0.35px">Importo Rid.\Magg.</div>
<div class="abs" style="left:1130px;top:897px;width:122px;height:25px;border:1px solid #c9cdd3;border-radius:2px;background:#fff"></div>
<div class="t" style="left:1258px;top:836.2px;width:117px;text-align:center;font-size:12px;font-weight:bold;color:#555;line-height:17.5px;letter-spacing:0.35px">Spese<br>documentate<br>esenti</div>
<div class="abs" style="left:1265px;top:897px;width:104px;height:25px;border:1px solid #c9cdd3;border-radius:2px;background:#fff"></div>
<div class="t" style="left:1375px;top:836.2px;width:117px;text-align:center;font-size:12px;font-weight:bold;color:#555;line-height:17.5px;letter-spacing:0.35px">Spese<br>documentate<br>non esenti</div>
<div class="abs" style="left:1382px;top:897px;width:104px;height:25px;border:1px solid #c9cdd3;border-radius:2px;background:#fff"></div>
<div class="t" style="left:1492px;top:853.8px;width:117px;text-align:center;font-size:12px;font-weight:bold;color:#555;line-height:17.5px;letter-spacing:0.35px">Spese forfettarie</div>
<div class="abs" style="left:1499px;top:897px;width:104px;height:25px;border:1px solid #c9cdd3;border-radius:2px;background:#fff"></div>
<div class="t" style="left:1609px;top:836.2px;width:117px;text-align:center;font-size:12px;font-weight:bold;color:#555;line-height:17.5px;letter-spacing:0.35px">Oneri e<br>contribuzioni<br>casse</div>
<div class="abs" style="left:1616px;top:897px;width:104px;height:25px;border:1px solid #c9cdd3;border-radius:2px;background:#fff"></div>
<div class="t" style="left:1726px;top:853.8px;width:117px;text-align:center;font-size:12px;font-weight:bold;color:#555;line-height:17.5px;letter-spacing:0.35px">Totale IVA</div>
<div class="abs" style="left:1733px;top:897px;width:104px;height:25px;border:1px solid #c9cdd3;border-radius:2px;background:#fff"></div>
<div class="t" style="left:1843px;top:845.0px;width:117px;text-align:center;font-size:12px;font-weight:bold;color:#555;line-height:17.5px;letter-spacing:0.35px">Ritenuta<br>d'acconto</div>
<div class="abs" style="left:1850px;top:897px;width:104px;height:25px;border:1px solid #c9cdd3;border-radius:2px;background:#fff"></div>
<div class="abs" style="left:1903px;top:49px;width:17px;height:920px;background:#fff"></div>
<svg class="abs" style="left:276px;top:929px" width="16" height="16" viewBox="0 0 16 16"><circle cx="8" cy="8" r="7.5" fill="#fff" stroke="#eee"/><path d="M5 7 L8 10 L11 7" fill="none" stroke="#555" stroke-width="1.2"/></svg>
<div class="t" style="left:297px;top:932px;font-size:12px;font-weight:bold;color:#555;letter-spacing:0.15px">Fase: 07 - PROGETTO AUTORIZZATIVO (N° 12)</div>
<div class="abs" style="left:0;top:952px;width:1920px;height:17px;background:#fff"></div>
<div class="abs" style="left:3px;top:955px;width:1701px;height:11px;border-radius:6px;background:#4a9bc9"></div>
<div class="abs" style="left:1906px;top:14px;width:11px;height:160px;border-radius:6px;background:#4a9bc9"></div>
</body></html>
